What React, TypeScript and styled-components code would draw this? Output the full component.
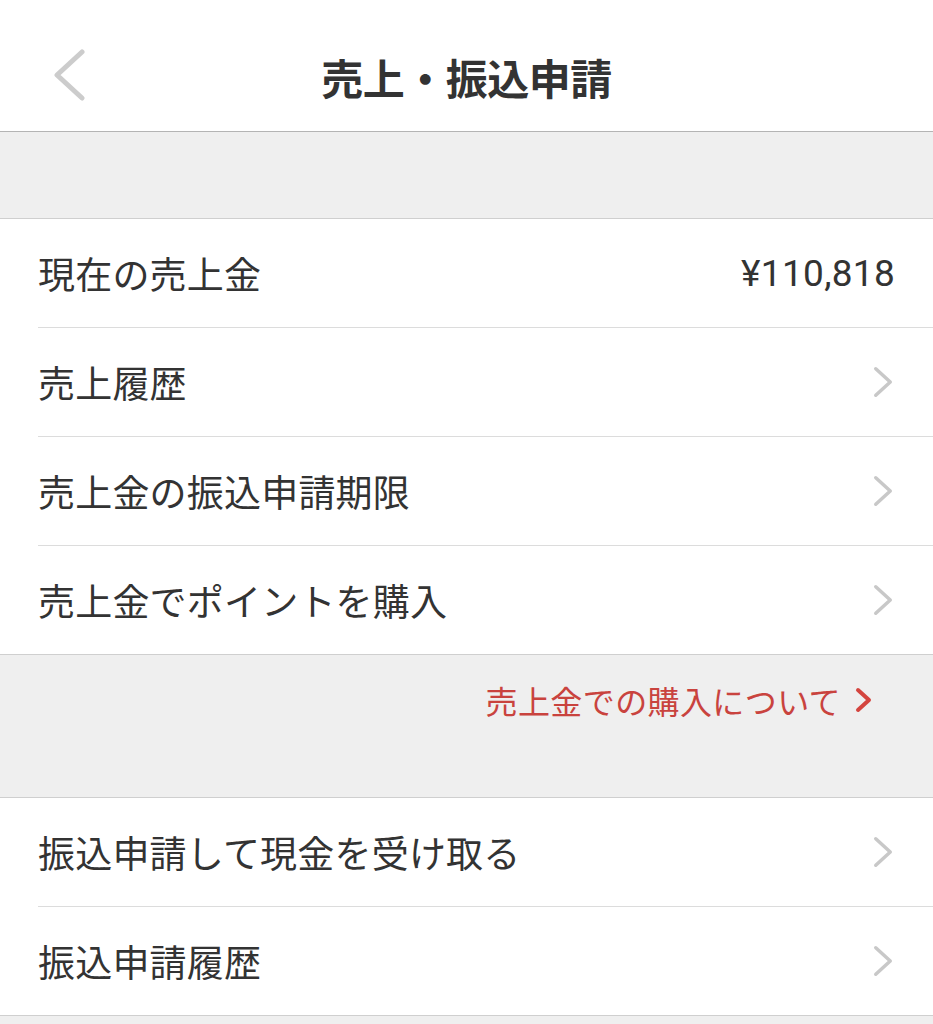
import styled, { createGlobalStyle } from 'styled-components';

const GlobalStyle = createGlobalStyle`
  html, body {
    margin: 0;
    padding: 0;
    background: #efefef;
  }
  body {
    font-family: 'Noto Sans CJK JP', 'Noto Sans', sans-serif;
    color: #333;
  }
`;

const Page = styled.div`
  width: 933px;
  min-height: 1024px;
  background: #efefef;
  display: flex;
  flex-direction: column;
`;

const Header = styled.header`
  height: 131px;
  background: #fff;
  border-bottom: 1px solid #b4b4b4;
  display: grid;
  grid-template-columns: 120px 1fr 120px;
  align-items: center;
`;

const BackButton = styled.button`
  border: none;
  background: none;
  padding: 18px 0 0 52px;
  height: 100%;
  display: flex;
  align-items: center;
  cursor: pointer;
`;

const Title = styled.h1`
  margin: 0;
  text-align: center;
  font-size: 42px;
  font-weight: 700;
  color: #333;
  letter-spacing: -0.5px;
  padding-top: 22px;
`;

const Spacer = styled.div`
  height: ${(p: { h: number }) => p.h}px;
`;

const Section = styled.section`
  background: #fff;
  border-top: 1px solid #cfcfcf;
  border-bottom: 1px solid #cfcfcf;
  padding-left: 38px;
`;

const Row = styled.div`
  height: 108px;
  display: flex;
  align-items: center;
  justify-content: space-between;
  padding-right: 40px;
  border-bottom: 1px solid #dcdcdc;

  &:last-child {
    border-bottom: none;
  }
`;

const Label = styled.span`
  font-size: 37px;
  font-weight: 400;
  color: #333;
  letter-spacing: 0.2px;
`;

const Amount = styled.span`
  font-family: Roboto, 'Noto Sans CJK JP', sans-serif;
  font-size: 37px;
  color: #333;
  letter-spacing: 0.3px;
  margin-right: -2px;
`;

const Note = styled.div`
  height: 142px;
  display: flex;
  justify-content: flex-end;
  align-items: flex-start;
  padding: 22px 61px 0 0;
  box-sizing: border-box;
`;

const NoteLink = styled.a`
  display: flex;
  align-items: center;
  gap: 14px;
  font-size: 32px;
  letter-spacing: 0.4px;
  color: #c9433e;
  text-decoration: none;
`;

const Chevron = ({ color = '#c8c8c8', w = 20, h = 32, sw = 3.5 }: { color?: string; w?: number; h?: number; sw?: number }) => (
  <svg width={w} height={h} viewBox={`0 0 ${w} ${h}`} fill="none">
    <path
      d={`M${sw / 2 + 1} ${sw / 2 + 1} L${w - sw / 2 - 1} ${h / 2} L${sw / 2 + 1} ${h - sw / 2 - 1}`}
      stroke={color}
      strokeWidth={sw}
      strokeLinecap="round"
      strokeLinejoin="round"
    />
  </svg>
);

const BackIcon = () => (
  <svg width="34" height="52" viewBox="0 0 34 52" fill="none">
    <path d="M30 3 L5 26 L30 49" stroke="#cccccc" strokeWidth="5" strokeLinecap="round" strokeLinejoin="round" />
  </svg>
);

const salesRows = ['売上履歴', '売上金の振込申請期限', '売上金でポイントを購入'];
const transferRows = ['振込申請して現金を受け取る', '振込申請履歴'];

export default function App() {
  return (
    <Page>
      <GlobalStyle />
      <Header>
        <BackButton aria-label="戻る">
          <BackIcon />
        </BackButton>
        <Title>売上・振込申請</Title>
        <div />
      </Header>

      <Spacer h={86} />

      <Section>
        <Row>
          <Label>現在の売上金</Label>
          <Amount>¥110,818</Amount>
        </Row>
        {salesRows.map((label) => (
          <Row key={label}>
            <Label>{label}</Label>
            <Chevron />
          </Row>
        ))}
      </Section>

      <Note>
        <NoteLink href="#">
          売上金での購入について
          <Chevron color="#d4453f" w={17} h={26} sw={4} />
        </NoteLink>
      </Note>

      <Section>
        {transferRows.map((label) => (
          <Row key={label}>
            <Label>{label}</Label>
            <Chevron />
          </Row>
        ))}
      </Section>
    </Page>
  );
}
